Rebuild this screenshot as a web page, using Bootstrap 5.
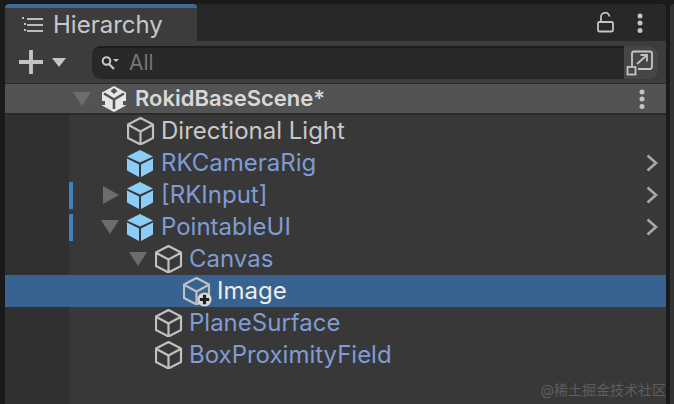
<!DOCTYPE html>
<html><head><meta charset="utf-8">
<link href="https://cdn.jsdelivr.net/npm/bootstrap@5.3.0/dist/css/bootstrap.min.css" rel="stylesheet">
<style>
html,body{margin:0;height:404px;overflow:hidden;background:#1a1a1a}
body{font-family:Inter,"Noto Sans CJK SC",sans-serif;color:#cfcfcf}
.shell{height:404px;padding:4px 0 0 5px;gap:4px}
.pane{width:661px;height:400px;flex:none;background:#383838;position:relative;border-radius:4px 4px 0 0;overflow:hidden}
.nextpane{flex:1;background:#333;border-radius:4px 0 0 0}
.tabbar{height:37px;background:#282828}
.tabactive{width:192px;background:#3c3c3c;border-top:4px solid #3f6a9c;border-radius:4px 4px 0 0;font-size:24px;padding-left:16px;gap:10px;line-height:1;color:#c8c8c8}
.tabtools{padding-right:23px;gap:23px}
.tools{height:42px;background:#3c3c3c;padding-left:14px}
.addcaret{margin-left:9px}
.search{margin-left:26px;width:532px;height:33px;background:#282828;border-top:2px solid #1c1c1c;border-radius:9px 0 0 9px;padding-left:9px;gap:10px;color:#757575;font-size:21px}
.maxbtn{width:34px;height:33px;background:#464646;border-radius:0 9px 9px 0;justify-content:center}
.scene{height:32px;background:#535353;border-top:1px solid #2a2a2a;border-bottom:2px solid #2a2a2a;font-weight:600;font-size:22px;color:#d8d8d8;padding-right:21px}
.gut{width:64px;flex:none;align-self:stretch;background:#303030}
.hrow{height:32px;font-size:24px;white-space:nowrap;color:#c8c8c8;position:relative}
.hrow.blue{color:#7f9cd5}
.hrow.sel{background:#386290;color:#ececec}
.hrow.sel .gut{background:#386290}
.ovr{position:absolute;left:64px;top:3px;width:4px;height:27px;background:#3f82bb}
.chev{position:absolute;right:7px;top:7px}
.ind{flex:none}
.d-a{width:32px}.d-b{width:58px}.d-c{width:60px}.d-d{width:86px}.d-e{width:114px}
.tri{width:20px;flex:none;margin-right:6px}
.ic{flex:none;margin-right:6px}
.plus{right:-1px;bottom:-2px}
.wm{position:absolute;right:0;bottom:7px;font-size:14px;color:#5e5e5e;line-height:1}
.scene .tri{margin-left:4px;margin-right:8px}
.botgut{height:48px}
</style></head><body>
<svg width="0" height="0" class="position-absolute"><defs>
<symbol id="cube" viewBox="0 0 28 28"><path d="M13.500 1 26 7.500V21L13.500 27.500 1 21V7.500ZM1.500 8 13.500 14.500 25.500 8M13.500 14.500V27" fill="none" stroke="#c0c0c0" stroke-width="2.200" stroke-linejoin="round"/></symbol>
<symbol id="blue" viewBox="1 0 28 28"><path d="M14 1 27 7.500 14 13.500 1 7.500Z" fill="#8ccdf5"/><path d="M1 9.500 13 15.500V28L1 21.500Z" fill="#8ccdf5"/><path d="M27 9.500 15 15.500V28L27 21.500Z" fill="#8ccdf5"/></symbol>
<symbol id="chev" viewBox="0 0 14 18"><path d="M2.500 1.500 11 9 2.500 16.500" fill="none" stroke="#a8a8a8" stroke-width="2.600"/></symbol>
<symbol id="down" viewBox="0 0 20 16"><path d="M0 1H18L9 15Z" fill="#6c6c6c"/></symbol>
<symbol id="right" viewBox="0 0 16 20"><path d="M0 1V19L16 10Z" fill="#6c6c6c"/></symbol>
<symbol id="dots" viewBox="0 0 6 20"><circle cx="3" cy="3" r="2.500" fill="#c4c4c4"/><circle cx="3" cy="10" r="2.500" fill="#c4c4c4"/><circle cx="3" cy="17.400" r="2.500" fill="#c4c4c4"/></symbol>
</defs></svg>
<div class="shell d-flex">
<div class="pane">
 <div class="tabbar d-flex justify-content-between">
  <div class="tabactive d-flex align-items-center">
   <svg width="22" height="18" viewBox="0 0 22 18"><path d="M6 3H22M6 9H22M6 15H22" stroke="#bdbdbd" stroke-width="2"/><path d="M1 1H3V3H1ZM3 7H5V9H3ZM3 13H5V15H3Z" fill="#bdbdbd"/></svg>
   <span>Hierarchy</span>
  </div>
  <div class="tabtools d-flex align-items-center">
   <svg width="17" height="21" viewBox="0 0 17 21"><path d="M4 10V5.500A4.200 4.200 0 0 1 12.500 4.500" fill="none" stroke="#c4c4c4" stroke-width="1.800"/><rect x="1" y="10" width="15" height="9.500" rx="1.500" fill="none" stroke="#c4c4c4" stroke-width="1.800"/></svg>
   <svg width="6" height="20"><use href="#dots"/></svg>
  </div>
 </div>
 <div class="tools d-flex align-items-center">
  <svg width="24" height="24" viewBox="0 0 25 25"><path d="M10.500 0H14.500V10.500H25V14.500H14.500V25H10.500V14.500H0V10.500H10.500Z" fill="#c4c4c4"/></svg>
  <svg class="addcaret" width="14" height="9" viewBox="0 0 14 9"><path d="M0 0H14L7 9Z" fill="#c4c4c4"/></svg>
  <div class="search d-flex align-items-center">
   <svg width="18" height="16" viewBox="0 0 18 16"><circle cx="5.500" cy="6" r="3.800" fill="none" stroke="#c8c8c8" stroke-width="2"/><path d="M8 9 13 14" stroke="#c8c8c8" stroke-width="2.200"/><path d="M12 4H18L15 7Z" fill="#c8c8c8"/></svg>
   <span>All</span>
  </div>
  <div class="maxbtn d-flex align-items-center">
   <svg width="30" height="27" viewBox="0 0 30 27"><path d="M6 17V4.500Q6 2.500 8 2.500H24Q26 2.500 26 4.500V17Q26 20 24 20H12" fill="none" stroke="#c4c4c4" stroke-width="1.800"/><rect x="1.500" y="18" width="8" height="7.500" fill="none" stroke="#c4c4c4" stroke-width="1.800"/><path d="M11 15 21 6M14.500 6H21V12.500" fill="none" stroke="#c4c4c4" stroke-width="1.800"/></svg>
  </div>
 </div>
 <div class="scene d-flex align-items-center">
  <div class="gut bg-transparent"></div>
  <svg class="tri" height="16"><use href="#down"/></svg>
  <svg class="ic me-2" width="26" height="26" viewBox="0 0 26 26"><path d="M13 0 25 6.500V19.500L13 26 1 19.500V6.500Z" fill="#e6e6e6"/><path d="M13 13.500V23M13 13.500 3 7.500M13 13.500 23 7.500" stroke="#535353" stroke-width="2.600"/><path d="M13 2 9.500 5 13 8 16.500 5Z" fill="#535353"/><path d="M1 15H4V19L1 19ZM25 15H22V19L25 19Z" fill="#535353"/></svg>
  <span class="flex-grow-1">RokidBaseScene*</span>
  <svg width="6" height="20"><use href="#dots"/></svg>
 </div>
 <div class="hrow d-flex align-items-center"><div class="gut"></div><div class="ind d-b"></div><svg class="ic" width="28" height="28"><use href="#cube"/></svg><span>Directional Light</span></div>
 <div class="hrow blue d-flex align-items-center"><div class="gut"></div><div class="ind d-b"></div><svg class="ic" width="28" height="28"><use href="#blue"/></svg><span>RKCameraRig</span><svg class="chev" width="14" height="18"><use href="#chev"/></svg></div>
 <div class="hrow blue d-flex align-items-center"><div class="gut"></div><div class="ovr"></div><div class="ind d-a"></div><svg class="tri" height="20"><use href="#right"/></svg><svg class="ic" width="28" height="28"><use href="#blue"/></svg><span>[RKInput]</span><svg class="chev" width="14" height="18"><use href="#chev"/></svg></div>
 <div class="hrow blue d-flex align-items-center"><div class="gut"></div><div class="ovr"></div><div class="ind d-a"></div><svg class="tri" height="16"><use href="#down"/></svg><svg class="ic" width="28" height="28"><use href="#blue"/></svg><span>PointableUI</span><svg class="chev" width="14" height="18"><use href="#chev"/></svg></div>
 <div class="hrow blue d-flex align-items-center"><div class="gut"></div><div class="ind d-c"></div><svg class="tri" height="16"><use href="#down"/></svg><svg class="ic" width="28" height="28"><use href="#cube"/></svg><span>Canvas</span></div>
 <div class="hrow sel d-flex align-items-center"><div class="gut"></div><div class="ind d-e"></div><div class="position-relative ic"><svg class="d-block" width="28" height="28"><use href="#cube"/></svg><svg class="position-absolute plus" width="15" height="15" viewBox="0 0 16 16"><circle cx="8" cy="8" r="7.500" fill="#d8d8d8"/><path d="M6.300 3H9.700V6.300H13V9.700H9.700V13H6.300V9.700H3V6.300H6.300Z" fill="#222"/></svg></div><span>Image</span></div>
 <div class="hrow blue d-flex align-items-center"><div class="gut"></div><div class="ind d-d"></div><svg class="ic" width="28" height="28"><use href="#cube"/></svg><span>PlaneSurface</span></div>
 <div class="hrow blue d-flex align-items-center"><div class="gut"></div><div class="ind d-d"></div><svg class="ic" width="28" height="28"><use href="#cube"/></svg><span>BoxProximityField</span></div>
 <div class="gut botgut"></div>
 <div class="wm">@稀土掘金技术社区</div>
</div>
<div class="nextpane"></div>
</div>
</body></html>
